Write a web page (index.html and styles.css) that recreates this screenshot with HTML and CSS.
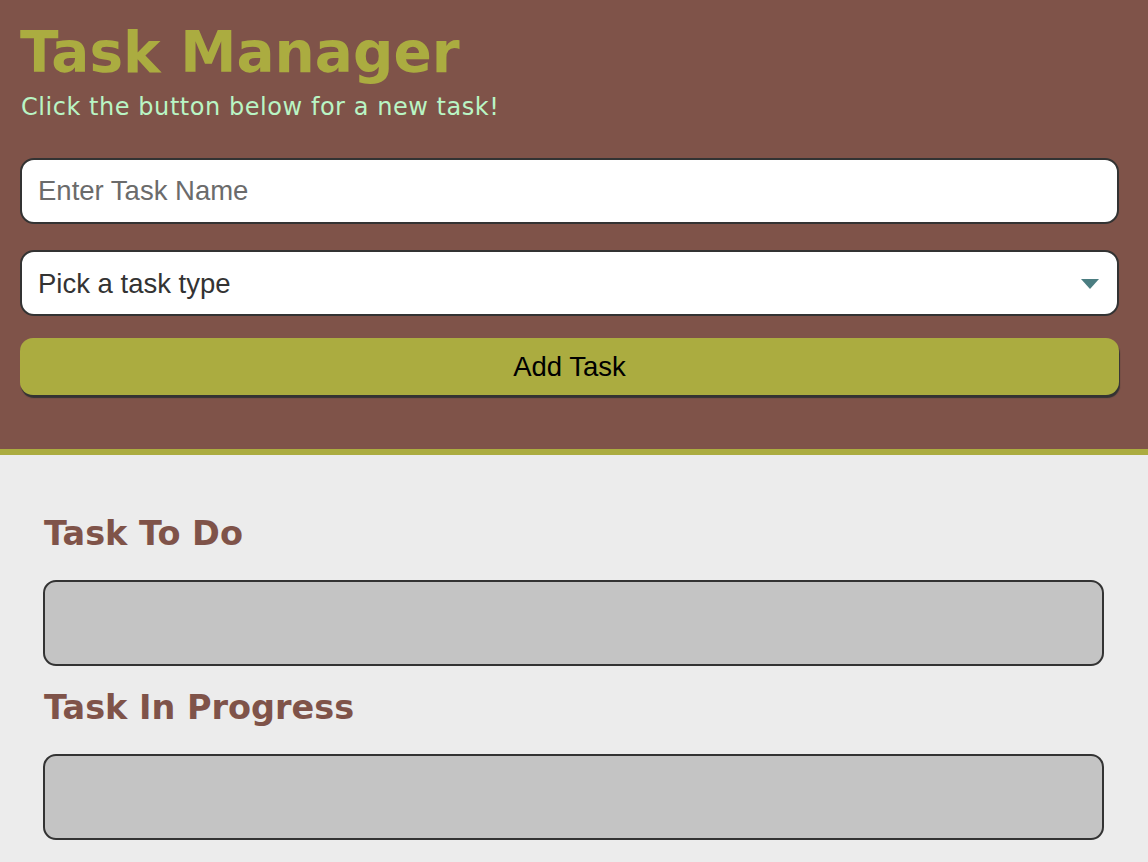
FILE: index.html
```html
<!DOCTYPE html>
<html lang="en">
<head>
<meta charset="utf-8">
<title>Task Manager</title>
<link rel="stylesheet" href="styles.css">
</head>
<body>
<header class="header">
  <h1 class="title">Task Manager</h1>
  <p class="subtitle">Click the button below for a new task!</p>
  <form class="task-form">
    <input class="field" type="text" placeholder="Enter Task Name">
    <div class="select-wrap">
      <select class="field select">
        <option>Pick a task type</option>
        <option>Low</option>
        <option>Medium</option>
        <option>High</option>
      </select>
      <svg class="arrow" width="18" height="10" viewBox="0 0 18 10"><path d="M0 0H18L9 10Z" fill="#4b7d81"/></svg>
    </div>
    <button class="add-btn" type="button">Add Task</button>
  </form>
</header>
<main class="board">
  <section class="column">
    <h2 class="column-title">Task To Do</h2>
    <div class="task-list"></div>
  </section>
  <section class="column">
    <h2 class="column-title">Task In Progress</h2>
    <div class="task-list"></div>
  </section>
</main>
</body>
</html>
```

FILE: styles.css
```css
html, body {
  margin: 0;
  padding: 0;
}

body {
  background: #ececec;
  font-family: "DejaVu Sans", Verdana, sans-serif;
}

.header {
  background: #7f5349;
  border-bottom: 6px solid #abac40;
  padding: 23px 29px 54px 20px;
}

.title {
  margin: 0;
  font-size: 56.5px;
  line-height: 60px;
  font-weight: bold;
  color: #abac40;
}

.subtitle {
  margin: 10px 0 0 1px;
  font-size: 24px;
  line-height: 28px;
  letter-spacing: 0.55px;
  color: #b9f5c4;
}

.task-form {
  margin-top: 37px;
  display: flex;
  flex-direction: column;
}

.field {
  box-sizing: border-box;
  width: 100%;
  height: 66px;
  border: 2px solid #333;
  border-radius: 14px;
  background: #fff;
  padding: 0 16px;
  font-family: "Liberation Sans", Arial, sans-serif;
  font-size: 27.5px;
  color: #333;
  outline: none;
}

.field::placeholder {
  color: #6b6b6b;
}

.select-wrap {
  position: relative;
  margin-top: 26px;
}

.select {
  appearance: none;
  -webkit-appearance: none;
  display: block;
}

.arrow {
  position: absolute;
  right: 20px;
  top: 29px;
  pointer-events: none;
}

.add-btn {
  margin-top: 22px;
  height: 57px;
  border: none;
  border-radius: 13px;
  background: #abac40;
  box-shadow: 1px 3px 1px #333;
  font-family: "Liberation Sans", Arial, sans-serif;
  font-size: 27.5px;
  color: #000;
  cursor: pointer;
}

.board {
  padding: 60px 44px 20px 43px;
}

.column-title {
  margin: 0 0 27px 1px;
  font-size: 33.5px;
  line-height: 38px;
  font-weight: bold;
  color: #7f5349;
}

.task-list {
  box-sizing: border-box;
  height: 86px;
  background: #c4c4c4;
  border: 2px solid #333;
  border-radius: 13px;
  margin-bottom: 23px;
}
```
